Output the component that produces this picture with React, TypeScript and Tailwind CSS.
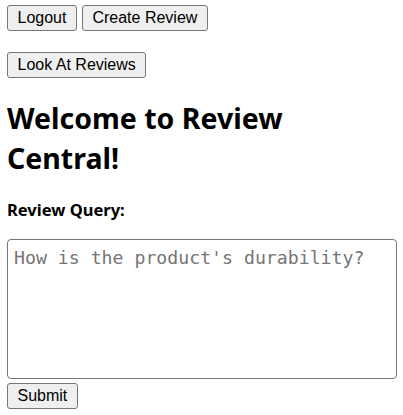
export default function App() {
  const btn =
    "h-[26px] px-[9.5px] bg-[#efefef] border border-[#767676] rounded-[3px] text-[16px] leading-[18px] text-black [font-family:'Liberation_Sans',Arial,sans-serif]";
  return (
    <div className="bg-white w-[403px] h-[415px] pl-[7px] pr-[6px] pt-[5px] text-black">
      <div className="flex gap-[5px]">
        <button className={btn}>Logout</button>
        <button className={btn}>Create Review</button>
      </div>
      <div className="flex mt-[21px]">
        <button className={btn}>Look At Reviews</button>
      </div>
      <h1 className="mt-[20px] text-[28.5px] leading-[40px] font-bold [font-family:'Noto_Sans',sans-serif]">
        Welcome to Review Central!
      </h1>
      <div className="mt-[21px] text-[16.5px] leading-[22px] font-bold [font-family:'Noto_Sans',sans-serif]">
        Review Query:
      </div>
      <textarea
        className="block mt-[18px] w-[390px] h-[140px] border border-[#767676] rounded-[4px] px-[6px] py-[6px] text-[18.2px] leading-[24px] placeholder:text-[#757575] [font-family:'DejaVu_Sans_Mono',monospace] resize-none outline-none"
        placeholder="How is the product's durability?"
      />
      <div className="flex mt-[4px]">
        <button className={btn}>Submit</button>
      </div>
    </div>
  );
}
